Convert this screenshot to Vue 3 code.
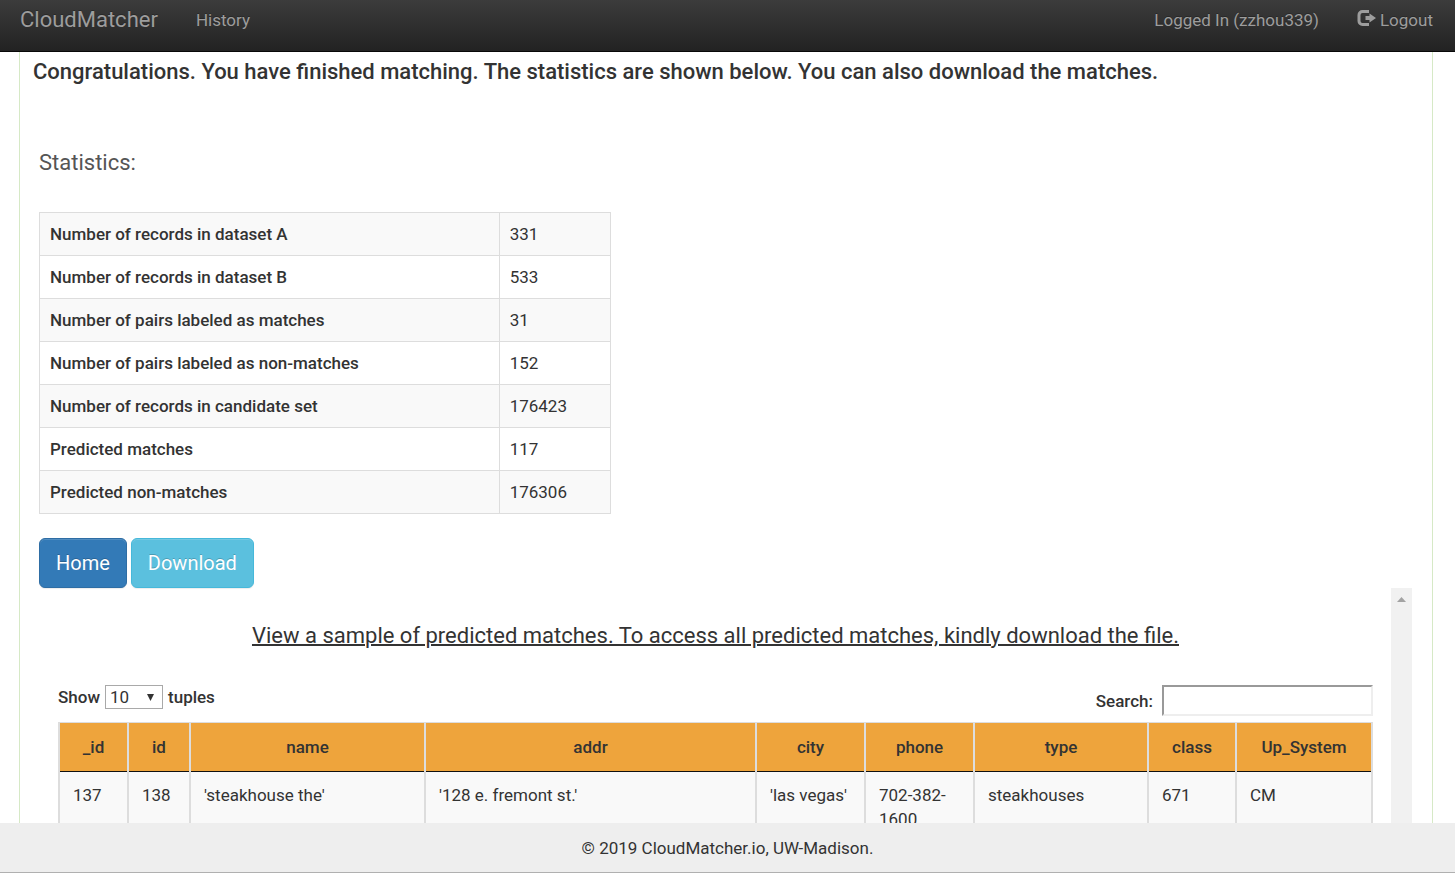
<script setup>
import { ref } from 'vue'

const stats = [
  ['Number of records in dataset A', '331'],
  ['Number of records in dataset B', '533'],
  ['Number of pairs labeled as matches', '31'],
  ['Number of pairs labeled as non-matches', '152'],
  ['Number of records in candidate set', '176423'],
  ['Predicted matches', '117'],
  ['Predicted non-matches', '176306'],
]

const columns = ['_id', 'id', 'name', 'addr', 'city', 'phone', 'type', 'class', 'Up_System']
const rows = [
  ['137', '138', "'steakhouse the'", "'128 e. fremont st.'", "'las vegas'", '702-382-1600', 'steakhouses', '671', 'CM'],
]

const pageSize = ref('10')
const query = ref('')
</script>

<template>
  <div class="page">
    <nav class="navbar">
      <a class="brand" href="#">CloudMatcher</a>
      <a class="nav-link" href="#">History</a>
      <span class="spacer"></span>
      <a class="nav-link user" href="#">Logged In (zzhou339)</a>
      <a class="nav-link logout" href="#">
        <svg class="logout-icon" width="19" height="18" viewBox="0 0 19 18" aria-hidden="true">
          <path d="M12 2.500H5.500a3.500 3.500 0 0 0-3.500 3.500v6a3.500 3.500 0 0 0 3.500 3.500H12" fill="none" stroke="currentColor" stroke-width="3" />
          <path d="M8.500 7h4V4.500l6.500 4.500-6.500 4.500V11h-4z" fill="currentColor" />
        </svg>
        <span>Logout</span>
      </a>
    </nav>

    <main class="content">
      <h1 class="headline">Congratulations. You have finished matching. The statistics are shown below. You can also download the matches.</h1>
      <section class="body">
        <h2 class="subtitle">Statistics:</h2>
        <table class="stats">
          <tbody>
            <tr v-for="[label, value] in stats" :key="label">
              <th scope="row">{{ label }}</th>
              <td>{{ value }}</td>
            </tr>
          </tbody>
        </table>
        <div class="actions">
          <button type="button" class="btn home">Home</button>
          <button type="button" class="btn download">Download</button>
        </div>
        <div class="panel">
          <div class="sample">
            <h3 class="sample-title">View a sample of predicted matches. To access all predicted matches, kindly download the file.</h3>
            <div class="controls">
              <label class="length">
                Show
                <span class="select-box">
                  <select v-model="pageSize">
                    <option>10</option>
                    <option>25</option>
                    <option>50</option>
                    <option>100</option>
                  </select>
                  <svg class="caret" width="7" height="7" viewBox="0 0 7 7" aria-hidden="true"><path d="M0 0h7L3.500 7z" fill="#333" /></svg>
                </span>
                tuples
              </label>
              <label class="search">Search: <input v-model="query" type="text" /></label>
            </div>
            <table class="matches">
              <colgroup>
                <col v-for="(c, i) in columns" :key="c" :class="'col-' + i" />
              </colgroup>
              <thead>
                <tr><th v-for="c in columns" :key="c" scope="col">{{ c }}</th></tr>
              </thead>
              <tbody>
                <tr v-for="row in rows" :key="row[0]">
                  <td v-for="(cell, i) in row" :key="i">{{ cell }}</td>
                </tr>
              </tbody>
            </table>
          </div>
          <div class="track">
            <svg width="9" height="5" viewBox="0 0 9 5" aria-hidden="true"><path d="M0 5L4.500 0 9 5z" fill="#a3a3a3" /></svg>
          </div>
        </div>
      </section>
    </main>

    <footer class="footer">© 2019 CloudMatcher.io, UW-Madison.</footer>
  </div>
</template>

<style>
body {
  background: #fff;
}
</style>

<style scoped>
.page,
.page * {
  box-sizing: border-box;
}
.page {
  display: flex;
  flex-direction: column;
  height: 100vh;
  overflow: hidden;
  font: 400 17px/24px Roboto, "Liberation Sans", sans-serif;
  color: #333;
}
.navbar {
  display: flex;
  flex: none;
  align-items: center;
  height: 52px;
  padding: 0 22px 12px 20px;
  background: linear-gradient(#3c3c3c, #222);
  border-bottom: 1px solid #080808;
}
.navbar a {
  color: #9d9d9d;
  text-decoration: none;
  text-shadow: 0 -1px 0 rgba(0, 0, 0, 0.25);
}
.brand {
  margin-right: 38px;
  font-size: 22px;
}
.spacer {
  flex: 1;
}
.user {
  margin-right: 38px;
}
.logout {
  display: flex;
  align-items: center;
  gap: 4px;
}
.logout-icon {
  margin-bottom: 4px;
}
.content {
  display: flex;
  flex: 1;
  flex-direction: column;
  min-height: 0;
  margin: 0 22px 0 19px;
  overflow: hidden;
  border: solid #d6e9c6;
  border-width: 0 1px;
}
.headline {
  margin: 0;
  padding: 4px 13px 0;
  font-size: 22px;
  font-weight: 500;
  line-height: 32px;
}
.body {
  display: flex;
  flex: 1;
  flex-direction: column;
  min-height: 0;
  padding: 59px 20px 0 19px;
}
.subtitle {
  margin: 0 0 33px;
  font-size: 22px;
  font-weight: 400;
  line-height: 32px;
  color: #555;
}
.stats {
  width: 41.66%;
  border-collapse: collapse;
  table-layout: fixed;
}
.stats th,
.stats td {
  height: 43px;
  padding: 9px 10px;
  border: 1px solid #ddd;
  text-align: left;
}
.stats th {
  width: 80.5%;
  font-weight: 500;
}
.stats tr:nth-child(odd) {
  background: #f9f9f9;
}
.actions {
  display: flex;
  gap: 4px;
  margin-top: 24px;
}
.btn {
  height: 50px;
  padding: 0 16px;
  border: 1px solid;
  border-radius: 6px;
  color: #fff;
  font: inherit;
  font-size: 20px;
  text-shadow: 0 -1px 0 rgba(0, 0, 0, 0.2);
  box-shadow: inset 0 1px 0 rgba(255, 255, 255, 0.15), 0 1px 1px rgba(0, 0, 0, 0.075);
}
.home {
  background: #337ab7;
  border-color: #2e6da4;
}
.download {
  background: #5bc0de;
  border-color: #46b8da;
}
.panel {
  display: flex;
  flex: 1;
  min-height: 0;
}
.sample {
  flex: 1;
  min-width: 0;
  padding: 32px 18px 0 19px;
}
.sample-title {
  margin: 0;
  font-size: 22px;
  font-weight: 400;
  line-height: 32px;
  text-align: center;
  text-decoration: underline;
  text-decoration-thickness: 2px;
}
.controls {
  display: flex;
  justify-content: space-between;
  align-items: flex-start;
  margin: 33px 0 6px;
}
.length,
.search {
  display: flex;
  align-items: center;
  font-weight: 500;
}
.length {
  gap: 5px;
}
.search {
  gap: 9px;
}
.select-box {
  position: relative;
  display: inline-flex;
}
select {
  width: 58px;
  height: 24px;
  padding: 0 4px;
  appearance: none;
  border: 1px solid #a9a9a9;
  border-radius: 0;
  background: #fff;
  color: #333;
  font: 400 17px/22px Roboto, "Liberation Sans", sans-serif;
}
.caret {
  position: absolute;
  right: 9px;
  top: 9px;
  pointer-events: none;
}
.search input {
  width: 211px;
  height: 31px;
  padding: 0 4px;
  border: 2px solid;
  border-color: #999 #eee #eee #999;
  background: #fff;
  font: inherit;
}
.matches {
  width: 100%;
  border-collapse: collapse;
  table-layout: fixed;
}
.matches th,
.matches td {
  border: 2px solid #ddd;
  padding: 12px 13px;
  vertical-align: top;
  text-align: left;
}
.matches th {
  border-top-width: 1px;
  border-bottom: 1px solid #111;
  background: #eea43c;
  font-weight: 500;
  text-align: center;
}
.matches td {
  padding-top: 11px;
  border-top: 1px solid #111;
  background: #f9f9f9;
}
.col-0 { width: 69px; }
.col-1 { width: 62px; }
.col-2 { width: 235px; }
.col-3 { width: 331px; }
.col-4 { width: 109px; }
.col-5 { width: 109px; }
.col-6 { width: 174px; }
.col-7 { width: 88px; }
.col-8 { width: 136px; }
.track {
  display: flex;
  flex: none;
  justify-content: center;
  width: 21px;
  padding-top: 9px;
  background: #f1f1f1;
}
.footer {
  flex: none;
  height: 50px;
  padding: 13px 0;
  border-bottom: 1px solid #b0b0b0;
  background: #eee;
  text-align: center;
}
</style>
